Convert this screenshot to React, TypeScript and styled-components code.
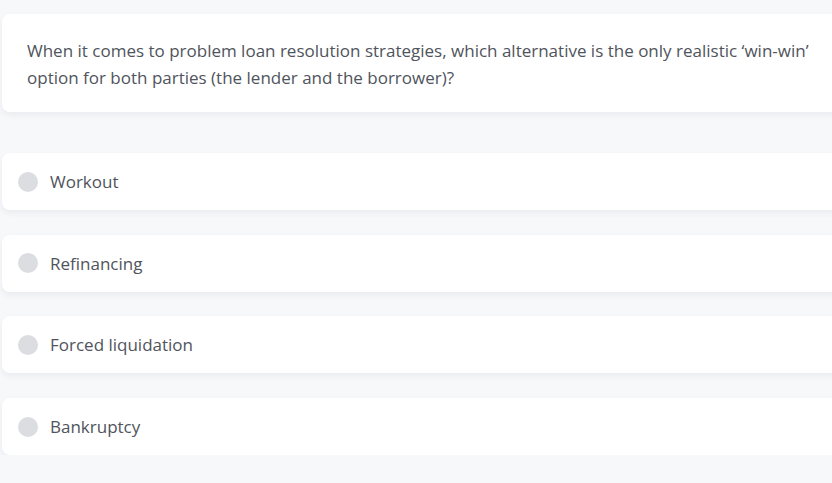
import React from 'react';
import styled, { createGlobalStyle } from 'styled-components';

const GlobalStyle = createGlobalStyle`
    html, body {
        margin: 0;
        padding: 0;
        background: #f7f8fa;
        overflow: hidden;
    }
    body {
        font-family: "Open Sans", "Noto Sans", sans-serif;
    }
`;

const Page = styled.div`
    width: 850px;
    padding: 14px 0 0 2px;
    display: flex;
    flex-direction: column;
`;

const Card = styled.div`
    background: #ffffff;
    border-radius: 8px;
    box-shadow: 0 3px 6px rgba(20, 30, 60, 0.06);
`;

const QuestionCard = styled(Card)`
    padding: 23px 25px 21px;
    font-size: 17px;
    line-height: 27px;
    color: #50545c;
    margin-bottom: 41px;
`;

const OptionList = styled.div`
    display: flex;
    flex-direction: column;
    gap: 24.7px;
`;

const OptionCard = styled(Card)`
    height: 57px;
    display: flex;
    align-items: center;
    gap: 12px;
    padding: 0 16px;
    font-size: 17px;
    color: #50545c;
    cursor: pointer;
`;

const Radio = styled.span`
    width: 20px;
    height: 20px;
    border-radius: 50%;
    background: #dcdde1;
    flex-shrink: 0;
`;

const options = ['Workout', 'Refinancing', 'Forced liquidation', 'Bankruptcy'];

export default function App() {
    return <>
        <GlobalStyle />
        <Page>
            <QuestionCard>
                When it comes to problem loan resolution strategies, which alternative is the only realistic ‘win-win’<br />
                option for both parties (the lender and the borrower)?
            </QuestionCard>
            <OptionList>
                {options.map(o => (
                    <OptionCard key={o}>
                        <Radio />
                        {o}
                    </OptionCard>
                ))}
            </OptionList>
        </Page>
    </>;
}
